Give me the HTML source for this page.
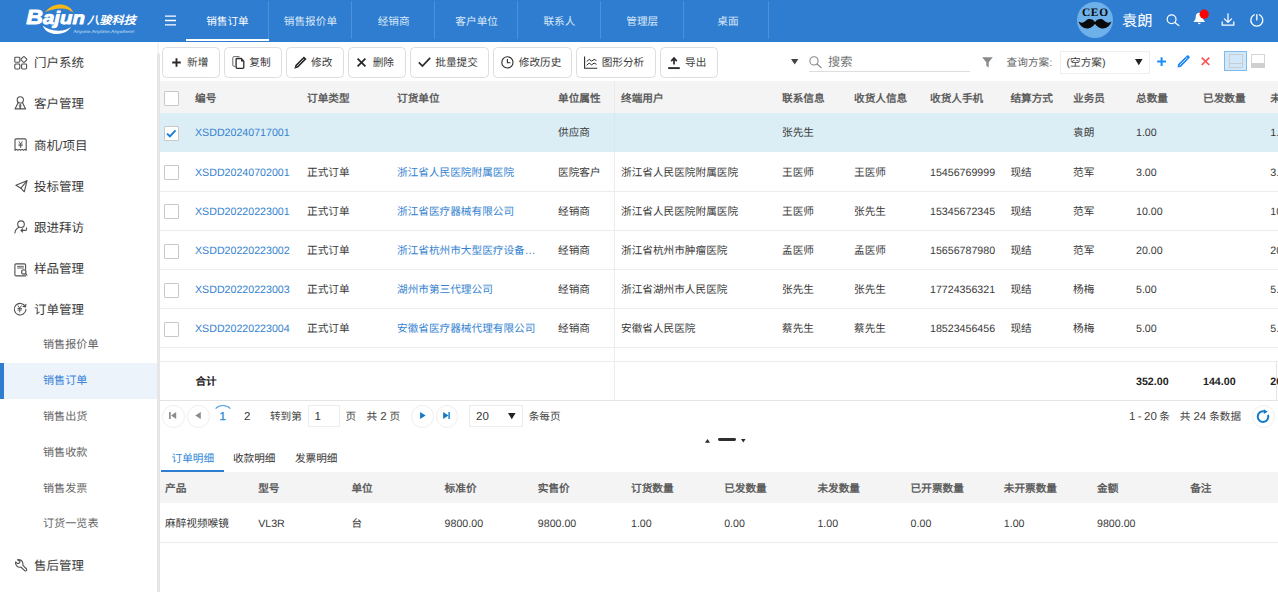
<!DOCTYPE html>
<html lang="zh-CN">
<head>
<meta charset="utf-8">
<title>销售订单</title>
<style>
*{box-sizing:border-box;margin:0;padding:0}
html,body{width:1278px;height:592px;overflow:hidden;background:#fff}
body{position:relative;font-family:"Liberation Sans",sans-serif;font-size:10.65px;color:#333;line-height:1;text-rendering:geometricPrecision}
.abs{position:absolute}
svg{display:block;overflow:visible}
/* header */
#hdr{position:absolute;left:0;top:0;width:1278px;height:42px;background:#2e7dd1}
.tab{position:absolute;top:0;height:42px;width:83px;color:#dbe8f7;font-size:10.65px;line-height:44.4px;text-align:center}
.tab:before{content:"";position:absolute;right:0;top:1px;width:1px;height:38px;background:#4c91da}
.tab.on{color:#fff}
.tab.on:after{content:"";position:absolute;left:0;right:0;top:39px;height:2px;background:#fff}
/* sidebar */
#side{position:absolute;left:0;top:42px;width:157px;height:550px;background:#fff}
.mi{position:absolute;left:34px;font-size:12.5px;color:#3a3a3a;white-space:nowrap;line-height:14px}
.si{position:absolute;left:43px;font-size:11.1px;color:#666;white-space:nowrap;line-height:13px}
.ico{position:absolute}
/* toolbar */
.btn{position:absolute;top:47px;height:31px;border:1px solid #dedede;border-radius:4.5px;background:#fff}
/* grid */
.th{position:absolute;font-weight:bold;color:#5e5e5e;font-size:10.65px;line-height:12px;white-space:nowrap}
.td{position:absolute;font-size:10.65px;line-height:12px;white-space:nowrap;color:#3a3a3a}
.lk{color:#3583d0}
.hl{position:absolute;left:159px;width:1119px;height:1px;background:#ececec}
.cb{position:absolute;left:164px;width:15px;height:15px;border:1px solid #c8c8c8;background:#fff;border-radius:1px}
.pg{position:absolute;top:405.3px;width:22.6px;height:22.6px;border:1px solid #eeeeee;border-radius:50%;background:#fff}
.pt{position:absolute;font-size:10.65px;line-height:12px;color:#444;white-space:nowrap}
.n{font-size:11.5px}
</style>
</head>
<body>
<div id="hdr">
<svg class="abs" style="left:0;top:0" width="160" height="42" viewBox="0 0 160 42">
<path d="M45 12.3C50 5.5 58 3.5 64 4.9C69 6.1 72.5 9.4 73.4 12.8C70 9.6 66 8.3 61 8.4C55 8.6 49 10 45 12.3Z" fill="#fab718"/>
<path d="M42.8 25.4C45 32.6 54 35.3 62 33.3C66.5 32.1 69.5 29.7 71 26.8C67.5 29.6 63 30.9 58 30.7C52 30.5 46.5 28.6 42.8 25.4Z" fill="#fff"/>
<text x="26.3" y="23.5" font-family="Liberation Sans, sans-serif" font-size="18" font-weight="bold" font-style="italic" fill="#fff" stroke="#fff" stroke-width="0.9" stroke-linejoin="round" textLength="58.6" lengthAdjust="spacingAndGlyphs"><tspan font-size="20.4">B</tspan>ajun</text>
<text x="87" y="23.6" font-family="Liberation Sans, sans-serif" font-size="11" font-weight="bold" font-style="italic" fill="#fff" textLength="49" lengthAdjust="spacingAndGlyphs">八骏科技</text>
<text x="73.5" y="32.7" font-family="Liberation Sans, sans-serif" font-size="4.4" fill="#cfe1f5" textLength="61" lengthAdjust="spacingAndGlyphs">Anyone,Anytime,Anywhere!</text>
</svg>
<svg class="abs" style="left:165px;top:15px" width="11" height="11" viewBox="0 0 11 11"><path d="M0 1.2h11M0 5.5h11M0 9.8h11" stroke="#fff" stroke-width="1.3" fill="none"/></svg>
<div class="tab on" style="left:186.0px;width:82.9px">销售订单</div>
<div class="tab" style="left:268.9px;width:83.1px">销售报价单</div>
<div class="tab" style="left:352.0px;width:83.2px">经销商</div>
<div class="tab" style="left:435.2px;width:82.9px">客户单位</div>
<div class="tab" style="left:518.1px;width:82.6px">联系人</div>
<div class="tab" style="left:600.7px;width:83.1px">管理层</div>
<div class="tab" style="left:683.8px;width:85.2px;padding-left:3px">桌面</div>
<div class="abs" style="left:1077px;top:2px;width:36px;height:36px;border-radius:50%;background:#6eb0e9"></div>
<div class="abs" style="left:1077px;top:7.6px;width:36px;text-align:center;font-family:'Liberation Serif',serif;font-weight:bold;font-size:11.4px;letter-spacing:0.7px;color:#0a0a0a;line-height:10px;padding-left:0.7px">CEO</div>
<svg class="abs" style="left:1078px;top:18px" width="34" height="12" viewBox="0 0 34 12"><path d="M17 4.2 C15 0.5 10.5 0 8.3 2.2 C6 4.6 3.2 5.6 0.6 3.6 C1.8 8.2 6 11 10.2 10.4 C13.6 9.9 15.8 7.8 17 5.8 C18.2 7.8 20.4 9.9 23.8 10.4 C28 11 32.2 8.2 33.4 3.6 C30.8 5.6 28 4.6 25.7 2.2 C23.5 0 19 0.5 17 4.2Z" fill="#0a0a0a"/></svg>
<div class="abs" style="left:1122px;top:13.1px;font-size:15.3px;line-height:17px;color:#fff;white-space:nowrap">袁朗</div>
<svg class="abs" style="left:1165.5px;top:13.8px" width="14" height="12" viewBox="0 0 14 12"><circle cx="5.6" cy="5.3" r="4.4" fill="none" stroke="#fff" stroke-width="1.25"/><path d="M8.8 8.6L12.8 11.6" stroke="#fff" stroke-width="1.25" stroke-linecap="round"/></svg>
<svg class="abs" style="left:1193px;top:12px" width="14" height="13" viewBox="0 0 14 13"><path d="M6.3 0.8c-2.4 0-3.6 1.8-3.6 3.9 0 2.4-0.6 3.6-1.9 4.6v0.7h11v-0.7c-1.3-1-1.9-2.2-1.9-4.6 0-2.1-1.2-3.9-3.6-3.9zM4.9 10.8a1.4 1.4 0 0 0 2.8 0z" fill="#fff"/></svg>
<svg class="abs" style="left:1198px;top:8px" width="12" height="12" viewBox="0 0 12 12"><circle cx="6.2" cy="6.2" r="4.6" fill="#ff0000"/></svg>
<svg class="abs" style="left:1221px;top:13px" width="14" height="14" viewBox="0 0 14 14"><path d="M7 0.8v8.4M3.4 5.9L7 9.4l3.6-3.5M1.2 8.8v3.4h11.6V8.8" fill="none" stroke="#fff" stroke-width="1.25" stroke-linecap="round" stroke-linejoin="round"/></svg>
<svg class="abs" style="left:1250.2px;top:13px" width="14" height="14" viewBox="0 0 14 14"><path d="M6.8 1.7v5.2M4.26 1.76a6 6 0 1 0 5.08 0" fill="none" stroke="#fff" stroke-width="1.3" stroke-linecap="round"/></svg>
</div>
<div id="side"></div>
<div class="abs" style="left:0;top:363px;width:157px;height:36px;background:#ecf3fb"></div><div class="abs" style="left:0;top:363px;width:4px;height:36px;background:#2e7dd1"></div>
<div class="abs" style="left:157px;top:42px;width:2px;height:12px;background:#f4f4f4;z-index:5"></div><div class="abs" style="left:157px;top:52.6px;width:3px;height:540px;background:#e6e6e6;border-radius:1.5px 1.5px 0 0;z-index:5"></div>
<svg class="ico" style="left:13.5px;top:55.5px" width="14" height="14" viewBox="0 0 14 14" fill="none" stroke="#525252" stroke-width="1.12" stroke-linecap="round" stroke-linejoin="round"><rect x="0.8" y="1.2" width="5" height="5" rx="0.9"/><rect x="0.8" y="8" width="5" height="5" rx="0.9"/><rect x="7.6" y="8" width="5" height="5" rx="0.9"/><rect x="7.6" y="1.2" width="4.6" height="4.6" rx="0.8" transform="rotate(45 9.9 3.5)"/></svg>
<svg class="ico" style="left:14.1px;top:96px" width="13" height="14" viewBox="0 0 13 14" fill="none" stroke="#525252" stroke-width="1.12" stroke-linecap="round" stroke-linejoin="round"><circle cx="6.3" cy="3.9" r="3.1"/><path d="M4.2 6.4L1 12.9h10.6L8.4 6.4"/><path d="M6.3 8.2v4.2M5.5 9l0.8-0.9 0.8 0.9-0.8 3.2z" stroke-width="0.8"/></svg>
<svg class="ico" style="left:14px;top:137.5px" width="14" height="14" viewBox="0 0 14 14" fill="none" stroke="#525252" stroke-width="1.12" stroke-linecap="round" stroke-linejoin="round"><path d="M1 12.3V2.2c0-0.8 0.5-1.3 1.3-1.3h8.6c0.8 0 1.3 0.5 1.3 1.3v10.1l-1.4-0.9-1.4 0.9-1.4-0.9-1.4 0.9-1.4-0.9-1.4 0.9-1.4-0.9z"/><path d="M5 3.6l1.6 2.3 1.6-2.3M4.9 6.2h3.4M4.9 7.7h3.4M6.6 5.9v3.6" stroke-width="0.9"/></svg>
<svg class="ico" style="left:14.5px;top:179.5px" width="13" height="13" viewBox="0 0 13 13" fill="none" stroke="#525252" stroke-width="1.12" stroke-linecap="round" stroke-linejoin="round"><path d="M0.9 5.2L11.9 0.8 9.3 11.8 5.9 8.2z"/><path d="M5.9 8.2L11.9 0.8"/></svg>
<svg class="ico" style="left:14px;top:220px" width="14" height="14" viewBox="0 0 14 14" fill="none" stroke="#525252" stroke-width="1.12" stroke-linecap="round" stroke-linejoin="round"><circle cx="7" cy="4.2" r="3.3"/><path d="M0.9 12.9c0.3-2.7 1.7-4.6 3.8-5.5"/><path d="M12.6 7.9v1.4c0 0.7-0.4 1.1-1.1 1.1H7M8.6 8.8L6.9 10.4 8.6 12"/></svg>
<svg class="ico" style="left:13.5px;top:262.5px" width="14" height="14" viewBox="0 0 14 14" fill="none" stroke="#525252" stroke-width="1.12" stroke-linecap="round" stroke-linejoin="round"><path d="M11.6 6.2V2.1c0-0.7-0.5-1.2-1.2-1.2H2.1c-0.7 0-1.2 0.5-1.2 1.2v9.6c0 0.7 0.5 1.2 1.2 1.2h9.5"/><path d="M3.6 3.4h5.8M3.6 5h5.8" stroke-width="0.9"/><circle cx="9.8" cy="8.9" r="2.2"/><path d="M11.4 10.5l1.6 1.6"/></svg>
<svg class="ico" style="left:12.8px;top:301.6px" width="14" height="14" viewBox="0 0 14 14" fill="none" stroke="#525252" stroke-width="1.12" stroke-linecap="round" stroke-linejoin="round"><path d="M12.3 4.6A5.8 5.8 0 1 0 12.9 7.4"/><path d="M12.9 2.4l-0.4 2.5-2.4-0.5"/><path d="M5 3.8l1.7 2.4 1.7-2.4M4.8 6.5h3.8M4.8 8h3.8M6.7 6.2v3.9" stroke-width="0.9"/></svg>
<svg class="ico" style="left:14.6px;top:558.6px" width="13" height="13" viewBox="0 0 13 13" fill="none" stroke="#525252" stroke-width="1.12" stroke-linecap="round" stroke-linejoin="round"><path d="M2.5 0.7C5 0.2 7.6 1.6 7.9 4.6C8 5.4 7.9 5.9 7.8 6.2L11.5 10C12.3 10.9 11 12.5 10 11.8L5.8 8C4.5 8.4 2.8 8 1.7 6.8C0.7 5.7 0.3 4.2 0.6 2.9L2.6 4.6 4.6 4 4.9 2.2z"/></svg>
<div class="mi" style="top:56.0px">门户系统</div>
<div class="mi" style="top:97.2px">客户管理</div>
<div class="mi" style="top:138.5px">商机/项目</div>
<div class="mi" style="top:179.6px">投标管理</div>
<div class="mi" style="top:220.8px">跟进拜访</div>
<div class="mi" style="top:262.0px">样品管理</div>
<div class="mi" style="top:303.2px">订单管理</div>
<div class="mi" style="top:559.3px">售后管理</div>
<div class="si" style="top:339.1px">销售报价单</div>
<div class="si" style="top:375.0px;color:#3a85d6">销售订单</div>
<div class="si" style="top:410.9px">销售出货</div>
<div class="si" style="top:446.8px">销售收款</div>
<div class="si" style="top:482.7px">销售发票</div>
<div class="si" style="top:518.2px">订货一览表</div>

<div class="btn" style="left:162px;width:58px"></div>
<div class="btn" style="left:224px;width:58px"></div>
<div class="btn" style="left:286px;width:58px"></div>
<div class="btn" style="left:348px;width:58px"></div>
<div class="btn" style="left:410px;width:79px"></div>
<div class="btn" style="left:493px;width:79px"></div>
<div class="btn" style="left:576px;width:80px"></div>
<div class="btn" style="left:660px;width:58px"></div>
<div class="td" style="left:187px;top:56.9px">新增</div>
<div class="td" style="left:249.3px;top:56.9px">复制</div>
<div class="td" style="left:311px;top:56.9px">修改</div>
<div class="td" style="left:372.7px;top:56.9px">删除</div>
<div class="td" style="left:435.3px;top:56.9px">批量提交</div>
<div class="td" style="left:518.8px;top:56.9px">修改历史</div>
<div class="td" style="left:601.7px;top:56.9px">图形分析</div>
<div class="td" style="left:685px;top:56.9px">导出</div>
<svg class="ico" style="left:172px;top:57.5px" width="9" height="9" viewBox="0 0 9 9" ><path d="M4.5 0.2v8.6M0.2 4.5h8.6" stroke="#2b2b2b" stroke-width="1.9" fill="none"/></svg>
<svg class="ico" style="left:231.5px;top:56px" width="13" height="13" viewBox="0 0 13 13" ><path d="M3.2 10.3H1.9c-0.7 0-1.1-0.4-1.1-1.1V1.7c0-0.7 0.4-1.1 1.1-1.1h5.6" stroke="#6a6a6a" stroke-width="1" fill="none"/><path d="M4.1 3.6c0-0.7 0.4-1.1 1.1-1.1h4l2.6 2.7v6c0 0.7-0.4 1.1-1.1 1.1H5.2c-0.7 0-1.1-0.4-1.1-1.1z" stroke="#2b2b2b" stroke-width="1.3" fill="none"/><path d="M9 2.6v2.8h2.7z" fill="#2b2b2b"/></svg>
<svg class="ico" style="left:293.6px;top:55.6px" width="13" height="13" viewBox="0 0 13 13"><path d="M9.9 0.4L12.6 3.1 4.1 11.6 0.3 12.7 1.4 8.9z" fill="#2b2b2b"/><path d="M3 10l6.6-6.6" stroke="#fff" stroke-width="0.75" stroke-linecap="round"/></svg>
<svg class="ico" style="left:357.3px;top:57.9px" width="9" height="9" viewBox="0 0 9 9" ><path d="M0.6 0.6l7.8 7.8M8.4 0.6L0.6 8.4" stroke="#2b2b2b" stroke-width="1.8" fill="none"/></svg>
<svg class="ico" style="left:417.5px;top:57px" width="13" height="10" viewBox="0 0 13 10" ><path d="M0.8 5.4l3.6 3.6 7.8-8.2" stroke="#2b2b2b" stroke-width="1.7" fill="none"/></svg>
<svg class="ico" style="left:500.5px;top:55.5px" width="13" height="13" viewBox="0 0 13 13" ><circle cx="6.4" cy="6.4" r="5.6" stroke="#2b2b2b" stroke-width="1.1" fill="none"/><path d="M6.4 3v3.7h3" stroke="#2b2b2b" stroke-width="1.1" fill="none"/></svg>
<svg class="ico" style="left:584px;top:56px" width="14" height="13" viewBox="0 0 14 13" ><path d="M0.6 0.4v11.9h12.6" stroke="#2b2b2b" stroke-width="1.1" fill="none"/><path d="M2.6 5.6l2.6-2.2 2.4 1.7 2.5-1.7 2.4 1.2M2.6 9.3l2.6-2.2 2.4 1.7 2.5-1.7 2.4 1.2" stroke="#2b2b2b" stroke-width="1" fill="none" stroke-linejoin="round"/></svg>
<svg class="ico" style="left:668px;top:56.5px" width="12" height="12" viewBox="0 0 12 12" ><path d="M6 7.6V1.4M3.2 4.1L6 1.1l2.8 3" stroke="#2b2b2b" stroke-width="1.7" fill="none" stroke-linejoin="miter"/><path d="M0.2 11.1h11.6" stroke="#2b2b2b" stroke-width="1.9"/></svg>
<svg class="ico" style="left:790.8px;top:58.8px" width="7.4" height="5.4" viewBox="0 0 7.4 5.4" ><path d="M0 0h7.4L3.7 5.4z" fill="#444"/></svg>
<svg class="ico" style="left:809px;top:55.5px" width="13" height="12" viewBox="0 0 13 12" ><circle cx="5" cy="4.9" r="4.1" stroke="#888" stroke-width="1.1" fill="none"/><path d="M8 8l4.2 3.6" stroke="#888" stroke-width="1.2" stroke-linecap="round"/></svg>
<div class="abs" style="left:828px;top:55.1px;font-size:12.2px;line-height:14px;color:#757575">搜索</div>
<div class="abs" style="left:808.8px;top:71px;width:161px;height:1px;background:#dedede"></div>
<svg class="ico" style="left:981.5px;top:56.5px" width="11" height="11" viewBox="0 0 11 11" ><path d="M0.2 0.3h10.6L6.7 5.2v5.3L4.3 8.7V5.2z" fill="#8a8a8a"/></svg>
<div class="td" style="left:1006.6px;top:56.9px;color:#666">查询方案:</div>
<div class="abs" style="left:1060.2px;top:51.4px;width:89.5px;height:22.2px;border:1px solid #eeeeee;background:#fff"></div>
<div class="td" style="left:1066.5px;top:57px">(空方案)</div>
<svg class="ico" style="left:1134.7px;top:59.3px" width="7.6" height="6.2" viewBox="0 0 7.6 6.2" ><path d="M0 0h7.6L3.8 6.2z" fill="#222"/></svg>
<svg class="ico" style="left:1156.5px;top:57.2px" width="9.2" height="9.2" viewBox="0 0 9.2 9.2" ><path d="M4.6 0.2v8.8M0.2 4.6h8.8" stroke="#1a8cff" stroke-width="2" fill="none"/></svg>
<svg class="ico" style="left:1177px;top:55.2px" width="13" height="13" viewBox="0 0 13 13" ><path d="M9.4 0.9a1.9 1.9 0 0 1 2.7 2.7L4 11.7 0.4 12.6 1.3 9z" fill="#1a86f5"/><path d="M2.9 10.1l6.3-6.3" stroke="#fff" stroke-width="0.8" stroke-linecap="round"/><path d="M8.6 1.9l2.5 2.5" stroke="#fff" stroke-width="0.5"/></svg>
<svg class="ico" style="left:1201.4px;top:57.2px" width="9" height="8.6" viewBox="0 0 9 8.6" ><path d="M0.7 0.6l7.6 7.4M8.3 0.6L0.7 8" stroke="#ff5252" stroke-width="1.7" fill="none"/></svg>
<div class="abs" style="left:1224px;top:51.4px;width:23px;height:19.2px;background:#d2e8f8;border:1px solid #7fbaee"></div>
<div class="abs" style="left:1228.5px;top:53.6px;width:14px;height:14.6px;border:1px solid #c6cdd3"></div><div class="abs" style="left:1228.5px;top:62.8px;width:14px;height:1px;background:#c6cdd3"></div>
<div class="abs" style="left:1251.2px;top:53.6px;width:14px;height:14.7px;border:1px solid #d6d6d6;background:#fff"></div><div class="abs" style="left:1251.2px;top:63px;width:14px;height:5.3px;background:#cfcfcf"></div>

<div class="abs" style="left:159px;top:81.3px;width:1119px;height:31.9px;background:#f4f4f4"></div>
<div class="abs" style="left:159px;top:113.2px;width:1119px;height:39px;background:#dbeef5"></div>
<div class="hl" style="top:190.80px"></div>
<div class="hl" style="top:229.85px"></div>
<div class="hl" style="top:268.90px"></div>
<div class="hl" style="top:307.95px"></div>
<div class="hl" style="top:347.00px"></div>
<div class="hl" style="top:360.9px"></div><div class="hl" style="top:400.3px;background:#e4e4e4"></div>
<div class="abs" style="left:614px;top:81.3px;width:1px;height:32px;background:#ebebeb"></div><div class="abs" style="left:614px;top:113.2px;width:1px;height:39px;background:#d5e8f0"></div><div class="abs" style="left:614px;top:152.2px;width:1px;height:248px;background:#ececec"></div>
<div class="abs" style="left:1276px;top:361px;width:1px;height:40px;background:#e4e4e4"></div>
<div class="th" style="left:195px;top:93.1px">编号</div>
<div class="th" style="left:307px;top:93.1px">订单类型</div>
<div class="th" style="left:397px;top:93.1px">订货单位</div>
<div class="th" style="left:558px;top:93.1px">单位属性</div>
<div class="th" style="left:621px;top:93.1px">终端用户</div>
<div class="th" style="left:782px;top:93.1px">联系信息</div>
<div class="th" style="left:854px;top:93.1px">收货人信息</div>
<div class="th" style="left:930px;top:93.1px">收货人手机</div>
<div class="th" style="left:1010.4px;top:93.1px">结算方式</div>
<div class="th" style="left:1073px;top:93.1px">业务员</div>
<div class="th" style="left:1136px;top:93.1px">总数量</div>
<div class="th" style="left:1203px;top:93.1px">已发数量</div>
<div class="th" style="left:1270.3px;top:93.1px">未发数量</div>
<div class="cb" style="top:90.5px"></div>
<div class="cb" style="top:126.3px"></div>
<div class="td lk" style="left:195px;top:127.4px">XSDD20240717001</div>
<div class="td" style="left:558px;top:127.4px">供应商</div>
<div class="td" style="left:782px;top:127.4px">张先生</div>
<div class="td" style="left:1073px;top:127.4px">袁朗</div>
<div class="td" style="left:1136px;top:127.4px">1.00</div>
<div class="td" style="left:1270.3px;top:127.4px">1.00</div>
<div class="cb" style="top:165.4px"></div>
<div class="td lk" style="left:195px;top:166.5px">XSDD20240702001</div>
<div class="td" style="left:307px;top:166.5px">正式订单</div>
<div class="td lk" style="left:397px;top:166.5px">浙江省人民医院附属医院</div>
<div class="td" style="left:558px;top:166.5px">医院客户</div>
<div class="td" style="left:621px;top:166.5px">浙江省人民医院附属医院</div>
<div class="td" style="left:782px;top:166.5px">王医师</div>
<div class="td" style="left:854px;top:166.5px">王医师</div>
<div class="td" style="left:930px;top:166.5px">15456769999</div>
<div class="td" style="left:1010.4px;top:166.5px">现结</div>
<div class="td" style="left:1073px;top:166.5px">范军</div>
<div class="td" style="left:1136px;top:166.5px">3.00</div>
<div class="td" style="left:1270.3px;top:166.5px">3.00</div>
<div class="cb" style="top:204.4px"></div>
<div class="td lk" style="left:195px;top:205.5px">XSDD20220223001</div>
<div class="td" style="left:307px;top:205.5px">正式订单</div>
<div class="td lk" style="left:397px;top:205.5px">浙江省医疗器械有限公司</div>
<div class="td" style="left:558px;top:205.5px">经销商</div>
<div class="td" style="left:621px;top:205.5px">浙江省人民医院附属医院</div>
<div class="td" style="left:782px;top:205.5px">王医师</div>
<div class="td" style="left:854px;top:205.5px">张先生</div>
<div class="td" style="left:930px;top:205.5px">15345672345</div>
<div class="td" style="left:1010.4px;top:205.5px">现结</div>
<div class="td" style="left:1073px;top:205.5px">范军</div>
<div class="td" style="left:1136px;top:205.5px">10.00</div>
<div class="td" style="left:1270.3px;top:205.5px">10.00</div>
<div class="cb" style="top:243.5px"></div>
<div class="td lk" style="left:195px;top:244.6px">XSDD20220223002</div>
<div class="td" style="left:307px;top:244.6px">正式订单</div>
<div class="td lk" style="left:397px;top:244.6px">浙江省杭州市大型医疗设备…</div>
<div class="td" style="left:558px;top:244.6px">经销商</div>
<div class="td" style="left:621px;top:244.6px">浙江省杭州市肿瘤医院</div>
<div class="td" style="left:782px;top:244.6px">孟医师</div>
<div class="td" style="left:854px;top:244.6px">孟医师</div>
<div class="td" style="left:930px;top:244.6px">15656787980</div>
<div class="td" style="left:1010.4px;top:244.6px">现结</div>
<div class="td" style="left:1073px;top:244.6px">范军</div>
<div class="td" style="left:1136px;top:244.6px">20.00</div>
<div class="td" style="left:1270.3px;top:244.6px">20.00</div>
<div class="cb" style="top:282.5px"></div>
<div class="td lk" style="left:195px;top:283.6px">XSDD20220223003</div>
<div class="td" style="left:307px;top:283.6px">正式订单</div>
<div class="td lk" style="left:397px;top:283.6px">湖州市第三代理公司</div>
<div class="td" style="left:558px;top:283.6px">经销商</div>
<div class="td" style="left:621px;top:283.6px">浙江省湖州市人民医院</div>
<div class="td" style="left:782px;top:283.6px">张先生</div>
<div class="td" style="left:854px;top:283.6px">张先生</div>
<div class="td" style="left:930px;top:283.6px">17724356321</div>
<div class="td" style="left:1010.4px;top:283.6px">现结</div>
<div class="td" style="left:1073px;top:283.6px">杨梅</div>
<div class="td" style="left:1136px;top:283.6px">5.00</div>
<div class="td" style="left:1270.3px;top:283.6px">5.00</div>
<div class="cb" style="top:321.6px"></div>
<div class="td lk" style="left:195px;top:322.7px">XSDD20220223004</div>
<div class="td" style="left:307px;top:322.7px">正式订单</div>
<div class="td lk" style="left:397px;top:322.7px">安徽省医疗器械代理有限公司</div>
<div class="td" style="left:558px;top:322.7px">经销商</div>
<div class="td" style="left:621px;top:322.7px">安徽省人民医院</div>
<div class="td" style="left:782px;top:322.7px">蔡先生</div>
<div class="td" style="left:854px;top:322.7px">蔡先生</div>
<div class="td" style="left:930px;top:322.7px">18523456456</div>
<div class="td" style="left:1010.4px;top:322.7px">现结</div>
<div class="td" style="left:1073px;top:322.7px">杨梅</div>
<div class="td" style="left:1136px;top:322.7px">5.00</div>
<div class="td" style="left:1270.3px;top:322.7px">5.00</div>
<svg class="ico" style="left:166.3px;top:129.4px" width="11" height="9" viewBox="0 0 11 9"><path d="M1 4.6l2.9 2.7 5.6-5.9" stroke="#1b7ed6" stroke-width="1.9" fill="none"/></svg>
<div class="td" style="left:195.4px;top:376.4px;font-weight:bold;color:#222">合计</div>
<div class="td" style="left:1136px;top:376.4px;font-weight:bold;color:#222">352.00</div>
<div class="td" style="left:1203px;top:376.4px;font-weight:bold;color:#222">144.00</div>
<div class="td" style="left:1270.3px;top:376.4px;font-weight:bold;color:#222">208.00</div>

<div class="pg" style="left:162.1px"></div>
<div class="pg" style="left:187.3px"></div>
<div class="pg" style="left:411.3px"></div>
<div class="pg" style="left:435.9px"></div>
<svg class="ico" style="left:169px;top:411.9px" width="7.4" height="7" viewBox="0 0 7.4 7"><path d="M0.9 0v7" stroke="#8c8c8c" stroke-width="1.7"/><path d="M7.2 0.1v6.8L2.1 3.5z" fill="#8c8c8c"/></svg>
<svg class="ico" style="left:195.3px;top:411.9px" width="6" height="7" viewBox="0 0 6 7"><path d="M5.8 0.1v6.8L0.2 3.5z" fill="#8c8c8c"/></svg>
<svg class="ico" style="left:419.7px;top:411.8px" width="6" height="7" viewBox="0 0 6 7"><path d="M0.1 0.1v6.8L5.6 3.5z" fill="#0f7acb"/></svg>
<svg class="ico" style="left:443.3px;top:411.8px" width="7" height="7" viewBox="0 0 7 7"><path d="M0.1 0.1v6.8L5.5 3.5z" fill="#0f7acb"/><path d="M6.1 0v7" stroke="#0f7acb" stroke-width="1.4"/></svg>
<div class="abs" style="left:211.8px;top:404.6px;width:22.4px;height:22.4px;border-radius:50%;border:1px solid transparent;border-top-color:#4a9be3"></div>
<div class="pt n" style="left:219.6px;top:410.9px;color:#2d8bd8;-webkit-text-stroke:0.35px #2d8bd8">1</div>
<div class="pt n" style="left:244px;top:410.9px;color:#333">2</div>
<div class="pt" style="left:269.9px;top:411px">转到第</div>
<div class="abs" style="left:307.5px;top:405px;width:32px;height:22.4px;border:1px solid #ececec;background:#fff"></div>
<div class="pt n" style="left:314.4px;top:410.9px;color:#333">1</div>
<div class="pt" style="left:345.6px;top:411px">页</div>
<div class="pt" style="left:366.6px;top:411px">共 <span class="n">2</span> 页</div>
<div class="abs" style="left:469.2px;top:405px;width:53.6px;height:22.4px;border:1px solid #ececec;background:#fff"></div>
<div class="pt n" style="left:476px;top:410.9px;color:#333">20</div>
<svg class="ico" style="left:508px;top:413.3px" width="7.6" height="6.2" viewBox="0 0 7.6 6.2"><path d="M0 0h7.6L3.8 6.2z" fill="#222"/></svg>
<div class="pt" style="left:528.7px;top:411px">条每页</div>
<div class="pt" style="left:1129px;top:411px"><span class="n" style="word-spacing:-0.8px">1 - 20</span><span style="margin-left:-0.6px"> 条</span></div>
<div class="pt" style="left:1179.8px;top:411px">共 <span class="n">24</span> 条数据</div>
<div class="pg" style="left:1251.6px;width:23.4px;height:23.4px;top:404.9px"></div>
<svg class="ico" style="left:1256.2px;top:408.7px" width="14" height="14" viewBox="0 0 14 14"><path d="M7.9 2.4A5.3 5.3 0 1 0 12 5.8" fill="none" stroke="#0f7acb" stroke-width="2"/><path d="M7.8 0.2l3.8 2.6-3.8 2.3z" fill="#0f7acb"/></svg>

<svg class="ico" style="left:705px;top:438.6px" width="5" height="3.8" viewBox="0 0 5 3.8"><path d="M0 3.8h5L2.5 0z" fill="#2a2a2a"/></svg>
<div class="abs" style="left:717.6px;top:438.1px;width:18.6px;height:2.9px;border-radius:1.4px;background:#2e2e2e"></div>
<svg class="ico" style="left:741.2px;top:438.8px" width="4.6" height="3.4" viewBox="0 0 4.6 3.4"><path d="M0 0h4.6L2.3 3.4z" fill="#2a2a2a"/></svg>

<div class="td" style="left:171.5px;top:453px;color:#2e86d6">订单明细</div>
<div class="td" style="left:232.9px;top:453px;color:#333">收款明细</div>
<div class="td" style="left:294.9px;top:453px;color:#333">发票明细</div>
<div class="abs" style="left:161px;top:470.3px;width:63px;height:2px;background:#2e7dd1"></div>
<div class="abs" style="left:159px;top:472.3px;width:1119px;height:31.1px;background:#f4f4f4"></div>
<div class="hl" style="top:542px"></div>
<div class="th" style="left:165.0px;top:483px">产品</div>
<div class="td" style="left:165.0px;top:517.9px">麻醉视频喉镜</div>
<div class="th" style="left:258.2px;top:483px">型号</div>
<div class="td" style="left:258.2px;top:517.9px">VL3R</div>
<div class="th" style="left:351.4px;top:483px">单位</div>
<div class="td" style="left:351.4px;top:517.9px">台</div>
<div class="th" style="left:444.6px;top:483px">标准价</div>
<div class="td" style="left:444.6px;top:517.9px">9800.00</div>
<div class="th" style="left:537.8px;top:483px">实售价</div>
<div class="td" style="left:537.8px;top:517.9px">9800.00</div>
<div class="th" style="left:631.0px;top:483px">订货数量</div>
<div class="td" style="left:631.0px;top:517.9px">1.00</div>
<div class="th" style="left:724.2px;top:483px">已发数量</div>
<div class="td" style="left:724.2px;top:517.9px">0.00</div>
<div class="th" style="left:817.4px;top:483px">未发数量</div>
<div class="td" style="left:817.4px;top:517.9px">1.00</div>
<div class="th" style="left:910.6px;top:483px">已开票数量</div>
<div class="td" style="left:910.6px;top:517.9px">0.00</div>
<div class="th" style="left:1003.8px;top:483px">未开票数量</div>
<div class="td" style="left:1003.8px;top:517.9px">1.00</div>
<div class="th" style="left:1097.0px;top:483px">金额</div>
<div class="td" style="left:1097.0px;top:517.9px">9800.00</div>
<div class="th" style="left:1190.2px;top:483px">备注</div>

</body>
</html>
